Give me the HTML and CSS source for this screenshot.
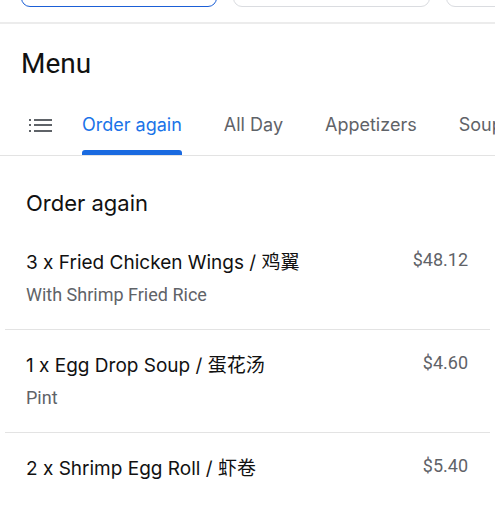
FILE: index.html
```html
<!DOCTYPE html>
<html lang="en">
<head>
    <meta charset="UTF-8">
    <title>Menu</title>
    <link rel="stylesheet" href="styles.css">
</head>
<body>
    <div class="chips">
        <div class="chip chip-active"></div>
        <div class="chip"></div>
        <div class="chip"></div>
    </div>

    <h1 class="menu-title">Menu</h1>

    <div class="tabs">
        <span class="tab-icon">
            <svg width="24" height="16" viewBox="0 0 24 16">
                <rect x="0" y="1" width="2" height="2" fill="#5f6368"/>
                <rect x="0" y="6" width="2" height="2" fill="#5f6368"/>
                <rect x="0" y="12" width="2" height="2" fill="#5f6368"/>
                <rect x="5" y="1" width="18" height="2" fill="#5f6368"/>
                <rect x="5" y="6" width="18" height="2" fill="#5f6368"/>
                <rect x="5" y="12" width="18" height="2" fill="#5f6368"/>
            </svg>
        </span>
        <span class="tab tab-active">Order again</span>
        <span class="tab">All Day</span>
        <span class="tab">Appetizers</span>
        <span class="tab">Soup</span>
    </div>

    <div class="section">
        <h2 class="section-title">Order again</h2>
        <ul class="items">
            <li class="item">
                <div class="item-info">
                    <div class="item-name">3 x Fried Chicken Wings / 鸡翼</div>
                    <div class="item-note">With Shrimp Fried Rice</div>
                </div>
                <div class="item-price">$48.12</div>
            </li>
            <li class="item">
                <div class="item-info">
                    <div class="item-name">1 x Egg Drop Soup / 蛋花汤</div>
                    <div class="item-note">Pint</div>
                </div>
                <div class="item-price">$4.60</div>
            </li>
            <li class="item">
                <div class="item-info">
                    <div class="item-name">2 x Shrimp Egg Roll / 虾卷</div>
                </div>
                <div class="item-price">$5.40</div>
            </li>
        </ul>
    </div>
</body>
</html>
```

FILE: styles.css
```css
* {
    margin: 0;
    padding: 0;
    box-sizing: border-box;
}
body {
    width: 495px;
    overflow: hidden;
    background: #ffffff;
    font-family: Roboto, "Noto Sans CJK SC", sans-serif;
    color: #202124;
}

/* chips row, cut off by the top edge */
.chips {
    display: flex;
    gap: 16px;
    height: 24px;
    padding: 0 0 15px 21px;
    align-items: flex-end;
    overflow: hidden;
    border-bottom: 2px solid #ececec;
}
.chip {
    flex-shrink: 0;
    width: 197px;
    height: 36px;
    border: 1px solid #dadce0;
    border-radius: 9px;
}
.chip-active {
    width: 196px;
    border-color: #1b5fd6;
}

.menu-title {
    font-size: 28px;
    font-weight: 400;
    line-height: 36px;
    padding: 22px 0 0 21px;
    color: #111111;
}

.tabs {
    display: flex;
    align-items: flex-end;
    padding-top: 31px;
    border-bottom: 1px solid #e3e3e3;
    white-space: nowrap;
}
.tab-icon {
    display: flex;
    flex-shrink: 0;
    width: 61px;
    padding: 0 0 21px 29px;
}
.tab {
    position: relative;
    flex-shrink: 0;
    margin: 0 21px;
    padding-bottom: 18px;
    font-family: Inter, "Noto Sans CJK SC", sans-serif;
    font-size: 18px;
    line-height: 24px;
    color: #5f6368;
}
.tab-active {
    color: #1a73e8;
}
.tab-active::after {
    content: "";
    position: absolute;
    left: 0;
    right: 0;
    bottom: 0;
    height: 5px;
    background: #1a6ae0;
    border-radius: 3px 3px 0 0;
}

.section {
    padding: 32px 5px 0;
}
.section-title {
    font-family: Inter, "Noto Sans CJK SC", sans-serif;
    font-size: 22px;
    font-weight: 400;
    line-height: 30px;
    padding-left: 21px;
    margin-bottom: 9px;
    color: #111111;
}
.items {
    list-style: none;
}
.item {
    display: flex;
    justify-content: space-between;
    align-items: flex-start;
    padding: 22px 22px 22px 21px;
    border-bottom: 1px solid #e3e3e3;
}
.item:last-child {
    border-bottom: none;
}
.item-name {
    font-family: Inter, "Noto Sans CJK SC", sans-serif;
    font-size: 19px;
    line-height: 28px;
    color: #111111;
}
.item-note {
    margin-top: 6px;
    font-size: 18px;
    line-height: 24px;
    color: #5f6368;
}
.item-price {
    font-size: 18px;
    line-height: 21px;
    color: #5f6368;
}
```
